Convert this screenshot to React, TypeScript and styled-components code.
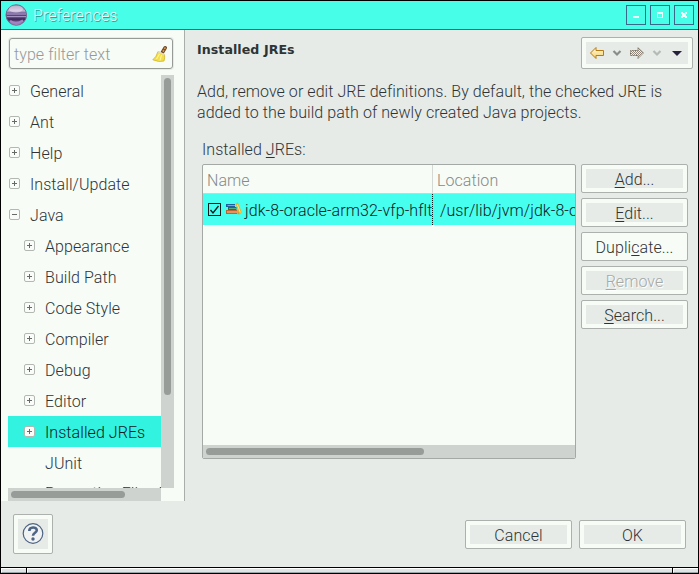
import React from "react";
import styled, { createGlobalStyle } from "styled-components";

const Global = createGlobalStyle`
  * { box-sizing: border-box; }
  body { margin: 0; background: #000; overflow: hidden; }
`;

const Window = styled.div`
  width: 699px;
  height: 574px;
  border: 1px solid #000;
  background: #e7ebe7;
  display: flex;
  flex-direction: column;
  overflow: hidden;
  font: 300 16px/21px Roboto, sans-serif;
  letter-spacing: 0.065px;
  color: #2e3436;
  white-space: nowrap;
  cursor: default;
`;

const TitleBar = styled.header`
  flex: 0 0 29px;
  display: flex;
  align-items: center;
  background: #47ffe8;
  border-bottom: 1px solid #30728f;
  padding: 0 4px 0 3px;
`;

const Title = styled.span`
  flex: 1;
  margin-left: 5px;
  color: #e7fffb;
  text-shadow: 1px 1px 0 #329e98;
`;

const TitleButtons = styled.div`
  display: flex;
  gap: 4px;
`;

const TitleButton = styled.button`
  width: 20px;
  height: 20px;
  padding: 0;
  border: 1px solid #3a6889;
  background: #47ffe8;
  display: grid;
  place-items: center;
`;

const Body = styled.main`
  flex: 0 0 471px;
  display: flex;
`;

const Sidebar = styled.aside`
  width: 184px;
  border-right: 1px solid #aaaeaa;
  background: #f7fcf7;
  padding: 8px 0 0 7px;
`;

const Filter = styled.div`
  width: 164px;
  height: 31px;
  margin-left: 1px;
  border: 1px solid #969b96;
  border-radius: 3px;
  box-shadow: 0 0 0 1px #e7ebe7;
  padding: 1px 4px 0 4px;
  display: flex;
  align-items: center;
  justify-content: space-between;
  color: #96999a;
`;

const Tree = styled.div`
  display: grid;
  grid-template: 413px 13px / 153px 13px;
  margin-top: 6px;
`;

const Rows = styled.div`
  overflow: hidden;
`;

const TreeRow = styled.div<{ $child?: boolean; $selected?: boolean }>`
  height: 31px;
  padding: 2px 0 0 ${(p) => (p.$child ? 16 : 1)}px;
  display: flex;
  align-items: center;
  gap: 10px;
  background: ${(p) => (p.$selected ? "#31f3df" : "transparent")};
  color: ${(p) => (p.$selected ? "#101a1c" : "inherit")};
  &:last-child { margin-top: -1px; }
`;

const Expander = styled.span<{ $hidden?: boolean }>`
  flex: none;
  width: 11px;
  height: 11px;
  margin-top: -3px;
  border: 1px solid #b3b8b3;
  border-radius: 2px;
  background: #f9fcf9;
  display: grid;
  place-items: center;
  visibility: ${(p) => (p.$hidden ? "hidden" : "visible")};
`;

const Track = styled.div`
  background: #cfd3cf;
  padding: 3px;
`;

const Thumb = styled.div<{ $width: number; $height: number }>`
  width: ${(p) => p.$width}px;
  height: ${(p) => p.$height}px;
  border-radius: 4px;
  background: #979c98;
`;

const Content = styled.section`
  flex: 1;
  padding: 7px 5px 0 12px;
`;

const PageHead = styled.div`
  display: flex;
  justify-content: space-between;
  align-items: flex-start;
`;

const Heading = styled.h1`
  margin: 5px 0 0;
  font: bold 12.6px/16px "DejaVu Sans", sans-serif;
`;

const Raised = styled.div`
  border: 1px solid #adb1ad;
  border-radius: 2px;
  background: #e7ebe7;
  box-shadow: inset 0 0 0 4px #f7fcf7;
`;

const Nav = styled(Raised)`
  width: 112px;
  height: 32px;
  display: flex;
  align-items: center;
`;

const Description = styled.p`
  margin: 12px 0 16px;
`;

const Group = styled.div`
  padding-left: 5px;
`;

const Columns = styled.div`
  display: flex;
  gap: 5px;
  margin-top: 4px;
`;

const Table = styled.div`
  width: 374px;
  height: 295px;
  border: 1px solid #a5a9a5;
  border-radius: 2px;
  background: #f7fcf7;
  overflow: hidden;
  display: flex;
  flex-direction: column;
`;

const TableHead = styled.div`
  flex: 0 0 29px;
  display: grid;
  grid-template-columns: 230px 1fr;
  border-bottom: 1px solid #cfd3cf;
  color: #858a89;
`;

const HeadCell = styled.div<{ $line?: boolean }>`
  padding: 5px 4px 0;
  border-right: ${(p) => (p.$line ? "1px solid #d5d9d5" : "none")};
`;

const TableRow = styled.div`
  flex: 0 0 31px;
  display: grid;
  grid-template-columns: 230px 1fr;
  background: #47ffef;
  color: #101a1c;
`;

const Cell = styled.div<{ $line?: boolean }>`
  min-width: 0;
  overflow: hidden;
  display: flex;
  align-items: center;
  padding: 2px 0 0 ${(p) => (p.$line ? 5 : 7)}px;
  border-right: ${(p) => (p.$line ? "1px dotted #101a1c" : "none")};
  svg { flex: none; margin-top: -3px; }
  svg + svg { margin: -3px 3px 0 5px; }
`;

const TableBlank = styled.div`
  flex: 1;
`;

const Actions = styled.div`
  display: flex;
  flex-direction: column;
  gap: 5px;
`;

const Button = styled.button<{ $hover?: boolean }>`
  width: 107px;
  height: 29px;
  padding: 2px 0 0;
  border: 1px solid #adb1ad;
  border-radius: 2px;
  background: ${(p) => (p.$hover ? "#f7fcf7" : "#e7ebe7")};
  box-shadow: inset 0 0 0 4px #f7fcf7;
  font: inherit;
  letter-spacing: inherit;
  color: #2e3436;
  &:disabled {
    color: #a5a9a6;
    text-shadow: 1px 1px 0 #fff;
  }
`;

const Key = styled.span`
  text-decoration: underline;
  text-decoration-thickness: 1px;
  text-underline-offset: 2px;
  text-decoration-skip-ink: none;
`;

const Footer = styled.footer`
  flex: 1;
  display: flex;
  align-items: flex-start;
  padding: 13px 12px 0;
`;

const Help = styled(Raised)`
  width: 40px;
  height: 40px;
  margin-right: auto;
  display: grid;
  place-items: center;
`;

const FooterButtons = styled.div`
  display: flex;
  gap: 7px;
  padding-top: 6px;
`;

const ResizeBar = styled.div`
  flex: 0 0 6px;
  border-top: 1px solid #000;
  display: grid;
  grid-template-columns: 25px 1fr 25px;
  gap: 1px;
  background: #000;
`;

const Grip = styled.div`
  background: #dfe5e4;
  border-top: 1px solid #fff;
  border-left: 1px solid #fff;
  border-bottom: 1px solid #9aa5a8;
`;

function Orb() {
  return (
    <svg width="24" height="24" viewBox="0 0 24 24">
      <defs>
        <linearGradient id="orb" x2="0" y2="1">
          <stop offset="0" stopColor="#75668f" />
          <stop offset=".3" stopColor="#c3b4d8" />
          <stop offset=".42" stopColor="#65508c" />
          <stop offset=".72" stopColor="#412c5e" />
          <stop offset="1" stopColor="#b79bd2" />
        </linearGradient>
      </defs>
      <circle cx="12.3" cy="12" r="10.3" fill="url(#orb)" stroke="#75698f" />
      <ellipse cx="12" cy="6" rx="7" ry="3.6" fill="#eee8f4" opacity=".55" />
      <path d="M3 11h19M3 13.7h19" stroke="#b7a5d3" strokeWidth="1" />
      <path d="M6 18Q12 22 19 17.5" stroke="#a384c4" strokeWidth="2.2" fill="none" />
    </svg>
  );
}

function Broom() {
  return (
    <svg width="16" height="18" viewBox="0 0 16 18">
      <path d="M13.2 2.8L10.4 7.4" stroke="#6b4520" strokeWidth="3.6" strokeLinecap="round" />
      <path d="M13.4 2.4L10.4 7.6" stroke="#d49a52" strokeWidth="1.6" strokeDasharray="2 1" />
      <path d="M6 6.5L12.5 9.5Q13 13 12 16Q7 17.5 0.8 14.8Q4.5 12 6 6.5Z" fill="#f4e045" stroke="#d0b22a" strokeWidth=".8" />
      <path d="M7.5 9L4.5 14M9.5 10L8 15.5" stroke="#fff8a8" />
      <path d="M6.3 6.8L12.5 9.8" stroke="#e5dcbc" strokeWidth="1.6" />
    </svg>
  );
}

function Books() {
  return (
    <svg width="16" height="14" viewBox="0 0 16 14">
      <path d="M0 2h9v3H0z" fill="#1f5f9c" />
      <path d="M1.5 3.5H9" stroke="#64b4d6" />
      <path d="M2 5h8.5v3H2z" fill="#1c7355" />
      <path d="M3 6.5h7" stroke="#58ad7e" />
      <path d="M0 8h11v4H0z" fill="#bd6232" />
      <path d="M1 10h10" stroke="#eda66f" strokeWidth="1.5" />
      <path d="M9.7 2L11.7 0L15.8 10.5L13.7 12.5Z" fill="#f5ae23" />
      <path d="M11.3 2.5L14.3 10.5" stroke="#ffe68a" />
      <path d="M11.4 7V12.3H13.7Z" fill="#e59220" />
    </svg>
  );
}

function Check() {
  return (
    <svg width="13" height="13" viewBox="0 0 13 13">
      <rect x=".5" y=".5" width="12" height="12" fill="none" stroke="#061b1b" />
      <path d="M2.5 7L5 10L10.5 3" fill="none" stroke="#061b1b" strokeWidth="1.3" />
    </svg>
  );
}

function NavIcons() {
  return (
    <svg width="110" height="30" viewBox="0 0 110 30">
      <defs>
        <pattern id="dither" width="2" height="2" patternUnits="userSpaceOnUse">
          <rect width="2" height="2" fill="#f2f0eb" />
          <path d="M0 0h1v1H0zM1 1h1v1H1z" fill="#91887b" />
        </pattern>
        <linearGradient id="gold" x2="0" y2="1">
          <stop stopColor="#fffbe0" />
          <stop offset="1" stopColor="#f6ce68" />
        </linearGradient>
      </defs>
      <path d="M8.5 15L14 9.5V12.5H21.5V17.5H14V20.5Z" fill="url(#gold)" stroke="#b77b12" />
      <path d="M31.5 13L35 16.5L38.5 13" fill="none" stroke="#898d89" strokeWidth="2.2" />
      <path d="M61.5 15L56 9.5V12.5H48.5V17.5H56V20.5Z" fill="url(#dither)" stroke="#75695a" strokeDasharray="1 .6" />
      <path d="M71.5 13L75 16.5L78.5 13" fill="none" stroke="#b5bab5" strokeWidth="2.2" />
      <path d="M90 13H100L95 18Z" fill="#25213d" />
    </svg>
  );
}

const nodes: { label: string; child?: boolean; open?: boolean; leaf?: boolean; selected?: boolean }[] = [
  { label: "General" },
  { label: "Ant" },
  { label: "Help" },
  { label: "Install/Update" },
  { label: "Java", open: true },
  { label: "Appearance", child: true },
  { label: "Build Path", child: true },
  { label: "Code Style", child: true },
  { label: "Compiler", child: true },
  { label: "Debug", child: true },
  { label: "Editor", child: true },
  { label: "Installed JREs", child: true, selected: true },
  { label: "JUnit", child: true, leaf: true },
  { label: "Properties Files Editor", child: true, leaf: true },
];

export default function App() {
  return (
    <Window>
      <Global />
      <TitleBar>
        <Orb />
        <Title>Preferences</Title>
        <TitleButtons>
          <TitleButton aria-label="Minimize">
            <svg width="18" height="18"><path d="M6 10h6v2H6z" fill="#eafffc" /></svg>
          </TitleButton>
          <TitleButton aria-label="Maximize">
            <svg width="18" height="18"><path d="M6 6h6v6H6zM7 8v3h4V8z" fill="#eafffc" fillRule="evenodd" /></svg>
          </TitleButton>
          <TitleButton aria-label="Close">
            <svg width="18" height="18"><path d="M6 6h2v1h2V6h2v2h-1v2h1v2h-2v-1H8v1H6v-2h1V8H6z" fill="#eafffc" /></svg>
          </TitleButton>
        </TitleButtons>
      </TitleBar>
      <Body>
        <Sidebar>
          <Filter>
            <span>type filter text</span>
            <Broom />
          </Filter>
          <Tree>
            <Rows>
              {nodes.map((n) => (
                <TreeRow key={n.label} $child={n.child} $selected={n.selected}>
                  <Expander $hidden={n.leaf}>
                    <svg width="9" height="9">
                      <path d={n.open ? "M2 4.5h5" : "M2 4.5h5M4.5 2v5"} stroke="#666b67" />
                    </svg>
                  </Expander>
                  {n.label}
                </TreeRow>
              ))}
            </Rows>
            <Track>
              <Thumb $width={7} $height={317} />
            </Track>
            <Track>
              <Thumb $width={114} $height={7} />
            </Track>
          </Tree>
        </Sidebar>
        <Content>
          <PageHead>
            <Heading>Installed JREs</Heading>
            <Nav><NavIcons /></Nav>
          </PageHead>
          <Description>
            Add, remove or edit JRE definitions. By default, the checked JRE is<br />
            added to the build path of newly created Java projects.
          </Description>
          <Group>
            <div>Installed <Key>J</Key>REs:</div>
            <Columns>
              <Table>
                <TableHead>
                  <HeadCell $line>Name</HeadCell>
                  <HeadCell>Location</HeadCell>
                </TableHead>
                <TableRow>
                  <Cell $line>
                    <Check />
                    <Books />
                    jdk-8-oracle-arm32-vfp-hflt
                  </Cell>
                  <Cell>/usr/lib/jvm/jdk-8-oracle</Cell>
                </TableRow>
                <TableBlank />
                <Track>
                  <Thumb $width={218} $height={7} />
                </Track>
              </Table>
              <Actions>
                <Button><Key>A</Key>dd...</Button>
                <Button><Key>E</Key>dit...</Button>
                <Button $hover>Dupli<Key>c</Key>ate...</Button>
                <Button disabled><Key>R</Key>emove</Button>
                <Button><Key>S</Key>earch...</Button>
              </Actions>
            </Columns>
          </Group>
        </Content>
      </Body>
      <Footer>
        <Help>
          <svg width="22" height="22" viewBox="0 0 22 22" fill="none">
            <circle cx="11" cy="10.5" r="9.8" fill="#f1f3f3" stroke="#4d6484" strokeWidth="1.2" />
            <path d="M7.3 8C7.3 3.3 14.8 3.5 14.8 7.2C14.8 9.8 11 9.8 11 12.8" stroke="#4d6484" strokeWidth="2.6" />
            <circle cx="11" cy="16" r="1.7" fill="#4d6484" />
          </svg>
        </Help>
        <FooterButtons>
          <Button>Cancel</Button>
          <Button>OK</Button>
        </FooterButtons>
      </Footer>
      <ResizeBar>
        <Grip />
        <Grip />
        <Grip />
      </ResizeBar>
    </Window>
  );
}
